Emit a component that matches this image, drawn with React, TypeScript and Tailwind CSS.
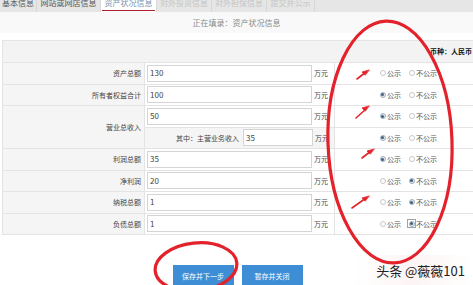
import React from "react";

type Choice = "none" | "show" | "hide";

const rows: { label: string; value: string; choice: Choice; sub?: { label: string; value: string; choice: Choice } }[] = [
  { label: "资产总额", value: "130", choice: "none" },
  { label: "所有者权益合计", value: "100", choice: "show" },
  {
    label: "营业总收入",
    value: "50",
    choice: "show",
    sub: { label: "其中：主营业务收入", value: "35", choice: "show" },
  },
  { label: "利润总额", value: "35", choice: "show" },
  { label: "净利润", value: "20", choice: "hide" },
  { label: "纳税总额", value: "1", choice: "hide" },
  { label: "负债总额", value: "1", choice: "hide" },
];

const tabs = [
  { label: "基本信息", w: "w-[37px]", tone: "text-[#555]" },
  { label: "网站或网店信息", w: "w-[64px]", tone: "text-[#555]" },
  { label: "资产状况信息", w: "w-[56px]", tone: "text-[#7a93ad]", active: true },
  { label: "对外投资信息", w: "w-[55px]", tone: "text-[#c4c4c4]" },
  { label: "对外担保信息", w: "w-[55px]", tone: "text-[#c4c4c4]" },
  { label: "提交并公示", w: "w-[48px]", tone: "text-[#c4c4c4]" },
];

function Radio({ on, focus }: { on: boolean; focus?: boolean }) {
  return (
    <span
      className={`flex h-[7px] w-[7px] items-center justify-center ${
        focus ? "outline outline-1 outline-[#9aa5b0]" : ""
      }`}
    >
      <span
        className={`flex h-[6px] w-[6px] items-center justify-center rounded-full border ${
          on ? "border-[#9fb0c0] bg-[#dfe6ec]" : "border-[#c8c8c8] bg-white"
        }`}
      >
        {on && <span className="h-[3px] w-[3px] rounded-full bg-[#3f5f7c]" />}
      </span>
    </span>
  );
}

function RadioCell({ choice, focus }: { choice: Choice; focus?: boolean }) {
  return (
    <div className="flex h-[21.5px] items-center border-b border-l border-[#e4e4e4] bg-white pl-[44px] text-[7px] text-[#555]">
      <Radio on={choice === "show"} />
      <span className="ml-[1px]">公示</span>
      <span className="ml-[7px]" />
      <Radio on={choice === "hide"} focus={focus} />
      <span className="ml-[1px]">不公示</span>
    </div>
  );
}

function Unit() {
  return <span className="ml-[2px] text-[7px] text-[#444]">万元</span>;
}

export default function App() {
  return (
    <div
      className="relative h-[285px] w-[473px] overflow-hidden bg-white"
      style={{ fontFamily: '"Noto Sans CJK SC", "Noto Sans", sans-serif' }}
    >
      {/* tabs */}
      <div className="flex h-[12px] overflow-hidden bg-[#e6e6e6]">
        {tabs.map((t) => (
          <div
            key={t.label}
            className={`relative flex h-[12px] shrink-0 justify-center border-r border-[#d8d8d8] ${t.w} ${
              t.active ? "bg-white" : ""
            }`}
          >
            <span className={`-mt-[2px] text-[8px] leading-[10px] ${t.tone}`}>{t.label}</span>
            {t.active && <span className="absolute bottom-[1px] left-[1px] right-[1px] h-[1px] bg-[#b0202a]" />}
          </div>
        ))}
      </div>

      {/* subtitle */}
      <div className="flex h-[21px] items-center justify-center bg-[#f9f9f9] text-[8px] text-[#8a8a8a]">
        正在填录：资产状况信息
      </div>

      {/* table */}
      <div className="ml-[2px] mt-[7px] border-l border-t border-[#e4e4e4]">
        <div className="flex h-[22px] items-center justify-end border-b border-[#e4e4e4] bg-[#f3f3f3] pr-[1px] text-[7px] font-bold text-[#111]">
          币种：人民币
        </div>
        <div className="grid grid-cols-[142px_189px_1fr]">
          {rows.map((r) => (
            <React.Fragment key={r.label}>
              <div
                className={`flex items-center justify-end border-b border-r border-[#e4e4e4] bg-[#f5f5f5] pr-[3px] text-[7px] text-[#444] ${
                  r.sub ? "row-span-2" : "h-[21.5px]"
                }`}
              >
                {r.label}
              </div>
              <div className="flex h-[21.5px] items-center border-b border-[#e4e4e4] bg-white pl-[2px]">
                <div className="flex h-[17px] w-[165px] items-center border border-[#d4d4d4] bg-white pl-[2px] text-[8px] text-[#444]">
                  {r.value}
                </div>
                <Unit />
              </div>
              <RadioCell choice={r.choice} focus={r.label === "负债总额"} />
              {r.sub && (
                <>
                  <div className="flex h-[21.5px] items-center border-b border-[#e4e4e4] bg-[#f5f5f5] pl-[31px]">
                    <span className="text-[7px] text-[#444]">{r.sub.label}</span>
                    <div className="ml-[4px] flex h-[17px] w-[70px] items-center border border-[#d4d4d4] bg-white pl-[2px] text-[8px] text-[#444]">
                      {r.sub.value}
                    </div>
                    <Unit />
                  </div>
                  <RadioCell choice={r.sub.choice} />
                </>
              )}
            </React.Fragment>
          ))}
        </div>
      </div>

      {/* buttons */}
      <div className="mt-[30px] flex justify-center gap-[8px] pl-[2px]">
        <button className="h-[22px] w-[61px] bg-[#3e8ed6] text-[7px] text-white">保存并下一步</button>
        <button className="h-[22px] w-[61px] bg-[#3e8ed6] text-[7px] text-white">暂存并关闭</button>
      </div>

      {/* watermark */}
      <div className="absolute bottom-0 right-0 flex h-[30px] w-[120px] items-center justify-end bg-gradient-to-r from-white/0 via-[#fdf3f3]/90 to-white/90 pr-[8px]">
        <span className="text-[13px] leading-none text-[#222]">头条 @薇薇101</span>
      </div>

      {/* red annotations */}
      <svg className="pointer-events-none absolute inset-0" width="473" height="285" viewBox="0 0 473 285">
        <g fill="none" stroke="#e3222b" strokeWidth="3.2">
          <ellipse cx="390" cy="142" rx="62" ry="121" transform="rotate(-2 390 142)" />
          <ellipse cx="196" cy="267" rx="41" ry="24" transform="rotate(-6 196 267)" />
        </g>
        <g stroke="#e3222b" strokeWidth="1.6" strokeLinecap="round" fill="#e3222b">
          <line x1="357" y1="79" x2="366" y2="72" />
          <polygon points="369,70 362,72 365,75" strokeWidth="0.8" />
          <line x1="356" y1="118" x2="366" y2="109" />
          <polygon points="369,106 362,108 365,111" strokeWidth="0.8" />
          <line x1="362" y1="158" x2="371" y2="151" />
          <polygon points="374,149 367,151 370,154" strokeWidth="0.8" />
          <line x1="352" y1="208" x2="366" y2="198" />
          <polygon points="369,196 362,198 365,201" strokeWidth="0.8" />
        </g>
      </svg>
    </div>
  );
}
